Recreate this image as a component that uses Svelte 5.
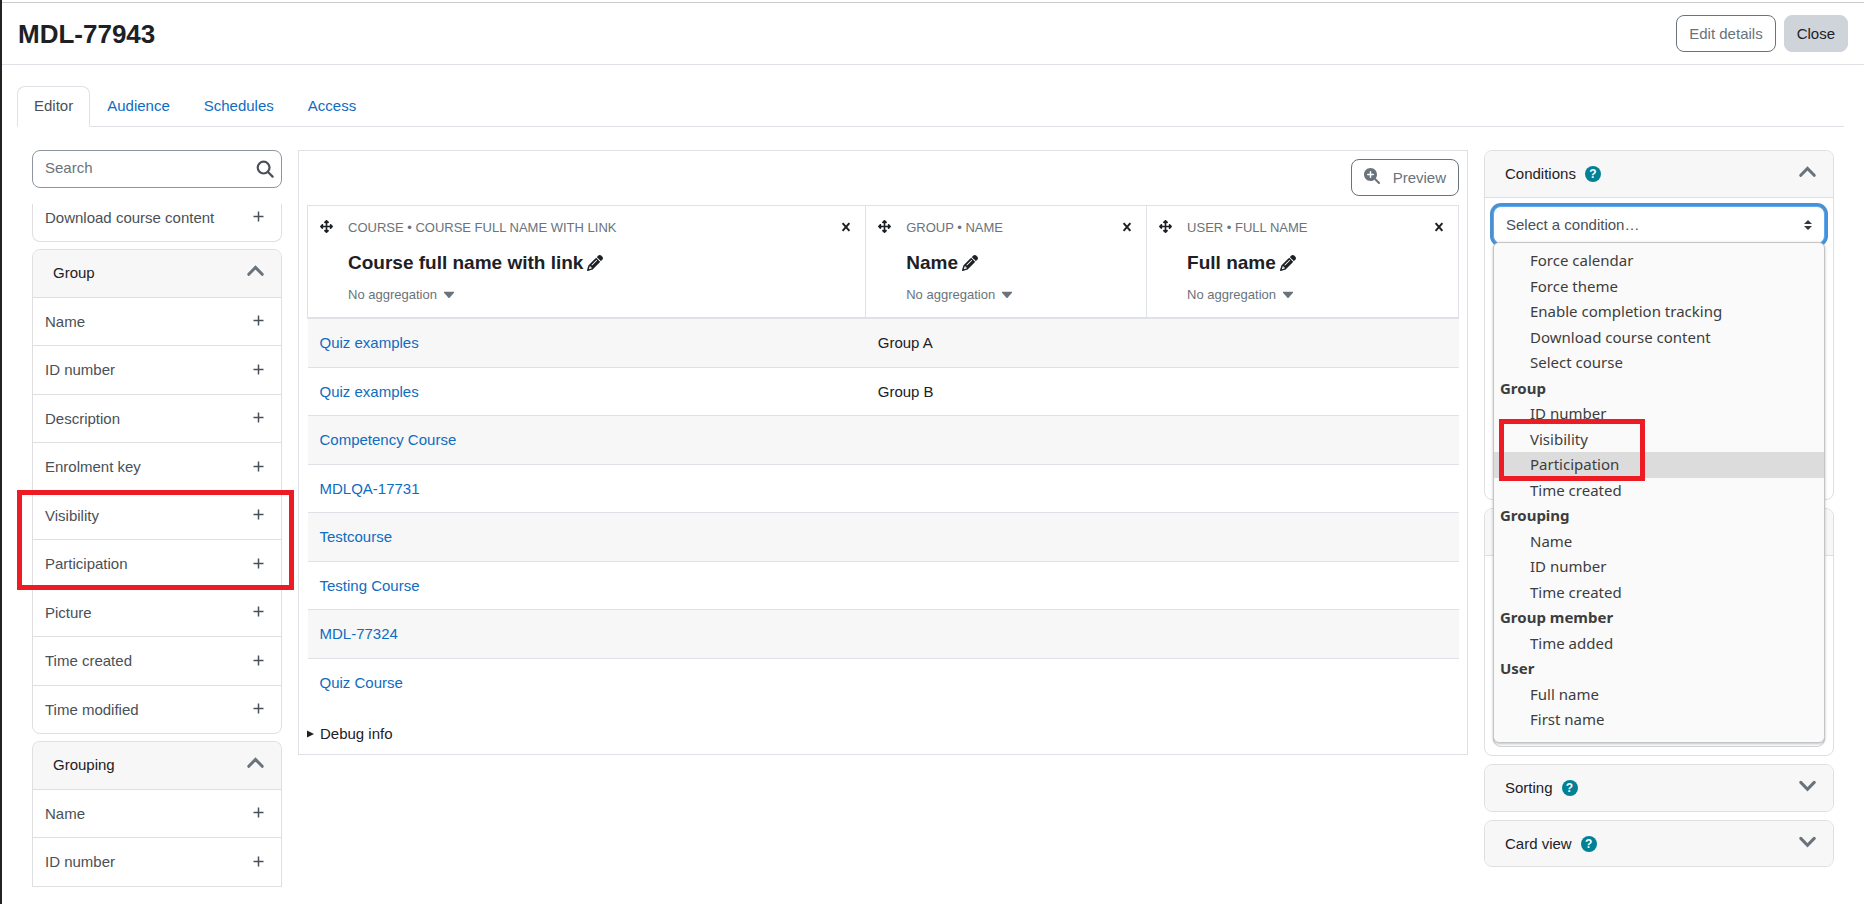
<script lang="ts">
  const tabs = ['Editor', 'Audience', 'Schedules', 'Access'];

  const cards = [
    { title: '', items: ['Download course content'] },
    {
      title: 'Group',
      items: [
        'Name', 'ID number', 'Description', 'Enrolment key', 'Visibility',
        'Participation', 'Picture', 'Time created', 'Time modified'
      ]
    },
    { title: 'Grouping', items: ['Name', 'ID number'], more: true }
  ];

  const columns = [
    { entity: 'Course', name: 'Course full name with link', size: 'wide' },
    { entity: 'Group', name: 'Name', size: 'narrow' },
    { entity: 'User', name: 'Full name', size: 'medium' }
  ];

  const rows = [
    ['Quiz examples', 'Group A'],
    ['Quiz examples', 'Group B'],
    ['Competency Course', ''],
    ['MDLQA-17731', ''],
    ['Testcourse', ''],
    ['Testing Course', ''],
    ['MDL-77324', ''],
    ['Quiz Course', '']
  ];

  const conditions = [
    {
      group: '',
      options: ['Force calendar', 'Force theme', 'Enable completion tracking', 'Download course content', 'Select course']
    },
    { group: 'Group', options: ['ID number', 'Visibility', 'Participation', 'Time created'] },
    { group: 'Grouping', options: ['Name', 'ID number', 'Time created'] },
    { group: 'Group member', options: ['Time added'] },
    { group: 'User', options: ['Full name', 'First name'] }
  ];

  let activeTab = $state('Editor');
  let hovered = $state('Participation');
  let search = $state('');
</script>

{#snippet chevron(open: boolean)}
  <svg class="chevron" width="17" height="12" viewBox="0 0 17 12" aria-hidden="true">
    <path d={open ? 'M1.8 9.3 8.5 2.4l6.7 6.9' : 'M1.8 2.4l6.7 6.9 6.7-6.9'} />
  </svg>
{/snippet}

{#snippet updown()}
  <svg class="updown" width="8" height="10" viewBox="0 0 8 10" aria-hidden="true">
    <path d="M4 0 0 4h8zM4 10 0 6h8z" />
  </svg>
{/snippet}

<div class="page">
  <header>
    <h1>MDL-77943</h1>
    <div class="actions">
      <button class="btn outline">Edit details</button>
      <button class="btn secondary">Close</button>
    </div>
  </header>

  <nav>
    {#each tabs as tab}
      <a href="#{tab.toLowerCase()}" class:active={tab === activeTab} onclick={() => (activeTab = tab)}>{tab}</a>
    {/each}
  </nav>

  <main>
    <aside class="sidebar">
      <div class="search">
        <input type="text" placeholder="Search" aria-label="Search" bind:value={search} />
        <svg width="18" height="18" viewBox="0 0 18 18" aria-hidden="true">
          <circle cx="7.6" cy="7.6" r="5.9" />
          <path d="M12 12l4.6 4.6" />
        </svg>
      </div>
      <div class="scroller">
        {#each cards as card}
          <section class="card" class:continued={!card.title} class:more={card.more}>
            {#if card.title}
              <button class="card-header">
                <span>{card.title}</span>
                {@render chevron(true)}
              </button>
            {/if}
            <ul>
              {#each card.items as item}
                <li>
                  <span>{item}</span>
                  <button class="add" aria-label="Add {item}">
                    <svg width="11" height="11" viewBox="0 0 11 11" aria-hidden="true">
                      <path d="M5.5 .5v10M.5 5.5h10" />
                    </svg>
                  </button>
                </li>
              {/each}
            </ul>
          </section>
        {/each}
      </div>
      <div class="marker columns-marker"></div>
    </aside>

    <section class="report">
      <div class="toolbar">
        <button class="btn outline preview">
          <svg width="16" height="16" viewBox="0 0 512 512" aria-hidden="true">
            <path d="M416 208c0 45.900-14.900 88.300-40 122.700L502.600 457.400c12.500 12.500 12.500 32.800 0 45.300s-32.800 12.500-45.300 0L330.700 376c-34.400 25.200-76.800 40-122.700 40C93.100 416 0 322.900 0 208S93.100 0 208 0S416 93.100 416 208zM184 296c0 13.300 10.700 24 24 24s24-10.700 24-24V232h64c13.300 0 24-10.700 24-24s-10.700-24-24-24H232V120c0-13.300-10.700-24-24-24s-24 10.700-24 24v64H120c-13.300 0-24 10.700-24 24s10.700 24 24 24h64v64z" />
          </svg>
          <span>Preview</span>
        </button>
      </div>

      <table>
        <thead>
          <tr>
            {#each columns as column}
              <th class={column.size}>
                <div class="heading">
                  <button class="icon" aria-label="Move column">
                    <svg width="13" height="13" viewBox="0 0 512 512" aria-hidden="true">
                      <path d="M278.6 9.400c-12.500-12.500-32.800-12.500-45.300 0l-64 64c-9.200 9.200-11.900 22.900-6.900 34.900s16.600 19.800 29.600 19.800h32v96H128V192c0-12.900-7.800-24.600-19.800-29.600s-25.700-2.200-34.900 6.900l-64 64c-12.500 12.500-12.500 32.800 0 45.300l64 64c9.200 9.200 22.900 11.900 34.900 6.900s19.800-16.600 19.800-29.600V288h96v96H192c-12.900 0-24.600 7.800-29.600 19.800s-2.200 25.700 6.900 34.900l64 64c12.500 12.500 32.800 12.500 45.300 0l64-64c9.200-9.200 11.900-22.900 6.900-34.900s-16.600-19.800-29.600-19.800H288V288h96v32c0 12.900 7.800 24.600 19.800 29.600s25.700 2.200 34.900-6.900l64-64c12.500-12.500 12.500-32.800 0-45.300l-64-64c-9.200-9.200-22.900-11.900-34.900-6.900s-19.800 16.600-19.800 29.600v32H288V128h32c12.900 0 24.600-7.800 29.600-19.800s2.200-25.700-6.900-34.900l-64-64z" />
                    </svg>
                  </button>
                  <span class="entity">{column.entity} • {column.name}</span>
                  <button class="icon" aria-label="Delete column">
                    <svg class="cross" width="10" height="10" viewBox="0 0 10 10" aria-hidden="true">
                      <path d="M1.600 1.200l6.800 7.600M8.400 1.200l-6.800 7.600" />
                    </svg>
                  </button>
                  <div class="name">
                    <span>{column.name}</span>
                    <button class="icon" aria-label="Rename column">
                      <svg width="16" height="16" viewBox="0 0 512 512" aria-hidden="true">
                        <path d="M410.300 231l11.300-11.300-33.900-33.900-62.100-62.100L291.700 89.800l-11.300 11.300-22.600 22.600L58.600 322.900c-10.400 10.400-18 23.300-22.200 37.400L1 480.700c-2.500 8.400-.2 17.500 6.100 23.700s15.300 8.500 23.700 6.100l120.300-35.400c14.100-4.200 27-11.800 37.400-22.200L387.700 253.700 410.300 231zM160 399.400l-9.100 22.700c-4 3.100-8.500 5.400-13.300 6.900L59.400 452l23-78.100c1.400-4.900 3.800-9.400 6.900-13.300l22.700-9.100v32c0 8.800 7.200 16 16 16h32zM362.700 18.700L348.300 33.200 325.700 55.800 314.300 67.100l33.900 33.900 62.100 62.100 33.900 33.900 11.300-11.300 22.600-22.600 14.500-14.500c25-25 25-65.500 0-90.500L453.300 18.700c-25-25-65.500-25-90.500 0zm-47.400 168l-144 144c-6.200 6.200-16.400 6.200-22.600 0s-6.200-16.400 0-22.600l144-144c6.200-6.200 16.400-6.200 22.600 0s6.200 16.400 0 22.600z" />
                      </svg>
                    </button>
                  </div>
                  <button class="aggregation">
                    <span>No aggregation</span>
                    <svg width="12" height="8" viewBox="0 0 12 8" aria-hidden="true">
                      <path d="M1.400 .8h9.200q.9.200.4.900L6.600 6.800q-.6.500-1.200 0L1 1.700q-.5-.7.400-.9z" />
                    </svg>
                  </button>
                </div>
              </th>
            {/each}
          </tr>
        </thead>
        <tbody>
          {#each rows as [course, group]}
            <tr>
              <td><a href="#course">{course}</a></td>
              <td>{group}</td>
              <td></td>
            </tr>
          {/each}
        </tbody>
      </table>

      <button class="debug">
        <svg width="7" height="8" viewBox="0 0 7 8" aria-hidden="true"><path d="M0 .5v7L7 4z" /></svg>
        <span>Debug info</span>
      </button>
    </section>

    <aside class="settings">
      <section class="card">
        <div class="card-header">
          <span>Conditions</span>
          <button class="help" aria-label="Help with conditions">?</button>
          <button class="toggle" aria-label="Collapse conditions">{@render chevron(true)}</button>
        </div>
        <div class="card-body conditions">
          <div class="select-wrap">
            <select class="focused" aria-label="Select a condition">
              <option>Select a condition…</option>
            </select>
            {@render updown()}
            <div class="menu" role="listbox" aria-label="Conditions">
              {#each conditions as { group, options }}
                {#if group}
                  <div class="menu-group">{group}</div>
                {/if}
                {#each options as option}
                  <div
                    class="menu-option"
                    class:hovered={option === hovered}
                    role="option"
                    tabindex="-1"
                    aria-selected={option === hovered}
                    onmouseenter={() => (hovered = option)}
                  >{option}</div>
                {/each}
              {/each}
              <div class="marker menu-marker"></div>
            </div>
          </div>
        </div>
      </section>

      <section class="card">
        <div class="card-header">
          <button class="toggle" aria-label="Collapse filters">{@render chevron(true)}</button>
        </div>
        <div class="card-body filters">
          <div class="select-wrap">
            <select aria-label="Select a filter"></select>
          </div>
        </div>
      </section>

      {#each ['Sorting', 'Card view'] as title}
        <section class="card">
          <div class="card-header closed">
            <span>{title}</span>
            <button class="help" aria-label="Help with {title}">?</button>
            <button class="toggle" aria-label="Expand {title}">{@render chevron(false)}</button>
          </div>
        </section>
      {/each}
    </aside>
  </main>
</div>

<style>
  :global(body) {
    background: #fff;
  }

  .page {
    box-sizing: border-box;
    min-height: 100vh;
    padding-top: 2px;
    border-left: 2px solid #232323;
    color: #1d2125;
    font-family: "Liberation Sans", Arial, sans-serif;
    font-size: 15px;
    line-height: 1.5;
  }

  .page :global(*) {
    box-sizing: border-box;
  }

  button,
  input,
  select {
    margin: 0;
    font: inherit;
    color: inherit;
  }

  button {
    padding: 0;
    border: 0;
    background: none;
    cursor: pointer;
  }

  svg {
    display: block;
    flex: none;
    fill: currentColor;
  }

  a {
    color: #0f6cbf;
    text-decoration: none;
  }

  header {
    display: flex;
    align-items: center;
    justify-content: space-between;
    height: 63px;
    padding: 0 16px;
    border-top: 1px solid #ccc;
    border-bottom: 1px solid #dee2e6;
  }

  h1 {
    margin: 0;
    font-size: 26px;
    line-height: 32px;
  }

  .actions {
    display: flex;
    gap: 8px;
  }

  .btn {
    padding: 7px 12px 6px;
    border: 1px solid transparent;
    border-radius: 8px;
  }

  .outline {
    border-color: #6a737b;
    background: #fff;
    color: #6a737b;
  }

  .secondary {
    border-color: #ced4da;
    background: #ced4da;
  }

  nav {
    display: flex;
    margin: 21px 20px 23px 15px;
    border-bottom: 1px solid #dee2e6;
  }

  nav a {
    margin-bottom: -1px;
    padding: 8px 16px;
    border: 1px solid transparent;
    border-radius: 8px 8px 0 0;
  }

  nav a.active {
    border-color: #dee2e6 #dee2e6 #fff;
    background: #fff;
    color: #495057;
  }

  main {
    display: flex;
    align-items: flex-start;
    gap: 16px;
    padding: 0 30px;
  }

  /* Sidebar */
  .sidebar {
    position: relative;
    flex: 0 0 250px;
  }

  .search {
    position: relative;
    color: #495057;
  }

  .search input {
    display: block;
    width: 100%;
    height: 38px;
    padding: 5px 36px 7px 12px;
    border: 1px solid #8f959e;
    border-radius: 8px;
    background: #fff;
    outline: none;
  }

  .search input::placeholder {
    color: #6a737b;
    opacity: 1;
  }

  .search svg {
    position: absolute;
    top: 10px;
    right: 8px;
    fill: none;
    stroke: currentColor;
    stroke-width: 2.2;
    stroke-linecap: round;
  }

  .scroller {
    height: calc(100vh - 221px);
    margin-top: 16px;
    overflow: hidden;
  }

  .card {
    margin-bottom: 8px;
    border: 1px solid #dfdfdf;
    border-radius: 8px;
    background: #fff;
  }

  .scroller .card {
    margin-bottom: 7px;
  }

  .card.continued {
    border-top: 0;
    border-radius: 0 0 8px 8px;
  }

  .continued li {
    padding-top: 3px;
  }

  /* list runs on below the visible part of the panel */
  .card.more {
    padding-bottom: 8px;
    border-bottom: 0;
    border-radius: 8px 8px 0 0;
  }

  .card-header {
    display: flex;
    align-items: center;
    width: 100%;
    min-height: 47px;
    padding: 12px 17px 12px 20px;
    border-bottom: 1px solid #dfdfdf;
    border-radius: 7px 7px 0 0;
    background: #f7f7f7;
    text-align: left;
  }

  .card-header > .chevron,
  .toggle {
    margin-left: auto;
  }

  .chevron {
    margin-bottom: 4px;
    fill: none;
    stroke: #6a737b;
    stroke-width: 3;
    stroke-linecap: round;
  }

  .card-header.closed {
    min-height: 0;
    padding-bottom: 11px;
    border-bottom: 0;
    border-radius: 7px;
  }

  ul {
    margin: 0;
    padding: 0;
    list-style: none;
  }

  li {
    display: flex;
    align-items: center;
    justify-content: space-between;
    padding: 13px 17px 12px 12px;
    border-bottom: 1px solid #dfdfdf;
    color: #495057;
  }

  .card:not(.more) li:last-child {
    border-bottom: 0;
  }

  .add svg {
    margin-bottom: 2px;
    fill: none;
    stroke: currentColor;
    stroke-width: 1.5;
  }

  .marker {
    position: absolute;
    border: 5px solid #ed1c24;
    pointer-events: none;
  }

  .columns-marker {
    top: 340px;
    right: -12px;
    left: -15px;
    height: 100px;
  }

  /* Report table */
  .report {
    flex: 1;
    min-width: 0;
    padding: 8px;
    border: 1px solid #dee2e6;
  }

  .toolbar {
    display: flex;
    justify-content: flex-end;
    margin-bottom: 9px;
  }

  .preview {
    display: flex;
    align-items: center;
    gap: 13px;
  }

  .preview svg {
    margin-bottom: 4px;
  }

  table {
    width: 100%;
    border-collapse: collapse;
    table-layout: fixed;
  }

  th {
    padding: 12px 14px 12px 12px;
    border: 1px solid #dee2e6;
    border-bottom-width: 2px;
    text-align: left;
    font-weight: normal;
  }

  .wide {
    width: 48.5%;
  }

  .narrow {
    width: 24.4%;
  }

  .medium {
    width: 27.1%;
  }

  .heading {
    display: grid;
    grid-template-columns: 12px 1fr 10px;
    column-gap: 16px;
  }

  .icon {
    display: flex;
    align-items: center;
  }

  .heading > .icon {
    padding-bottom: 3px;
  }

  .cross {
    fill: none;
    stroke: currentColor;
    stroke-width: 2;
  }

  .entity {
    color: #6a737b;
    font-size: 13px;
    line-height: 20px;
    text-transform: uppercase;
  }

  .name {
    display: flex;
    grid-column: 2;
    gap: 4px;
    margin: 11px 0 8px;
    font-size: 19px;
    font-weight: bold;
    line-height: 28px;
  }

  .aggregation {
    display: flex;
    grid-column: 2;
    align-items: center;
    gap: 6px;
    color: #6a737b;
    font-size: 13px;
    line-height: 20px;
  }

  td {
    padding: 13px 12px 12px;
    border-top: 1px solid #dee2e6;
  }

  tbody tr:nth-child(odd) {
    background: #f7f7f7;
  }

  .debug {
    display: flex;
    align-items: center;
    gap: 6px;
    margin-top: 17px;
  }

  /* Settings */
  .settings {
    flex: 0 0 350px;
  }

  .help {
    width: 16px;
    height: 16px;
    margin-left: 9px;
    border-radius: 50%;
    background: #008196;
    color: #fff;
    font-size: 12px;
    font-weight: bold;
    line-height: 16px;
    text-align: center;
  }

  .card-body {
    display: flex;
    flex-direction: column;
    padding: 8px;
  }

  .conditions {
    height: 301px;
  }

  .filters {
    justify-content: flex-end;
    height: 199px;
  }

  .select-wrap {
    position: relative;
  }

  select {
    display: block;
    width: 100%;
    height: 38px;
    padding: 6px 28px 6px 12px;
    border: 1px solid #ced4da;
    border-radius: 8px;
    background: #fff;
    color: #495057;
    appearance: none;
    outline: none;
  }

  select.focused {
    border-color: #5ba9f3;
    box-shadow: 0 0 0 3px #4a90d2;
  }

  .updown {
    position: absolute;
    top: 14px;
    right: 13px;
    color: #343a40;
  }

  .menu {
    position: absolute;
    z-index: 1;
    top: 36px;
    right: 0;
    left: 0;
    padding: 5px 0 9px;
    border: 1px solid #c4c4c4;
    border-radius: 6px;
    background: #fafafa;
    box-shadow: 0 1px 3px rgba(0, 0, 0, 0.25);
    color: #3d3d3d;
    font-family: "Noto Sans", "Open Sans", sans-serif;
    line-height: 1.7;
  }

  .menu-group {
    padding-left: 6px;
    font-weight: bold;
  }

  .menu-option {
    padding-left: 36px;
  }

  .menu-option.hovered {
    background: #dcdcdc;
  }

  .menu-marker {
    top: 176px;
    left: 5px;
    width: 146px;
    height: 62px;
  }
</style>
